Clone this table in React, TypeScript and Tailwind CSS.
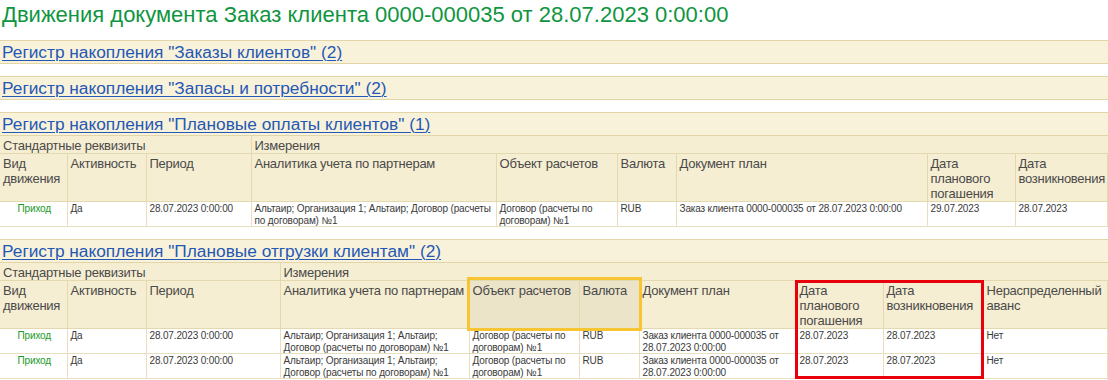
import React from 'react';

interface Column {
  title: string;
  width?: number;
  marked?: boolean;
}

interface RegisterTableProps {
  columns: Column[];
  standardSpan: number;
  rows: string[][];
}

const Band: React.FC<{ title: string }> = ({ title }) => (
  <div className="h-[24px] border-y border-[#e2d6a9] bg-[#f9f2db] px-[2px]">
    <a href="#" className="text-[17.3px] leading-[22px] text-[#2458b5] underline decoration-1 underline-offset-2">
      {title}
    </a>
  </div>
);

const RegisterTable: React.FC<RegisterTableProps> = ({ columns, standardSpan, rows }) => {
  const th = 'border border-[#e3d8ae] pl-[3px] pr-[1px] pt-[2px] align-top text-left font-normal text-[13px] leading-[15px] tracking-[-0.25px] text-[#4a4a4a]';
  const td = 'border border-[#e8dfbe] pl-[3px] pr-[1px] pt-[1px] pb-0 align-top text-[10px] leading-[11.5px] tracking-[-0.15px]';

  return (
    <table className="w-full table-fixed border-collapse">
      <colgroup>
        {columns.map((c, i) => (
          <col key={i} style={c.width ? { width: c.width } : undefined} />
        ))}
      </colgroup>
      <thead>
        <tr className="h-[17px] bg-[#f6eed2]">
          <th colSpan={standardSpan} className={`${th} border-t-0 border-l-0 pt-0`}>
            Стандартные реквизиты
          </th>
          <th colSpan={columns.length - standardSpan} className={`${th} border-t-0 border-r-0 pt-0`}>
            Измерения
          </th>
        </tr>
        <tr className="h-[48px] bg-[#f6eed2]">
          {columns.map((c, i) => (
            <th
              key={i}
              className={`${th} ${i === 0 ? 'border-l-0' : ''} ${c.marked ? 'bg-[#ebe4c9]' : ''}`}
            >
              {c.title}
            </th>
          ))}
        </tr>
      </thead>
      <tbody>
        {rows.map((r, ri) => (
          <tr key={ri} className="h-[25px] bg-white">
            {r.map((v, ci) => (
              <td
                key={ci}
                className={`${td} ${ci === 0 ? 'border-l-0 text-center text-[#179a27]' : 'text-[#3a3a3a]'}`}
              >
                {v}
              </td>
            ))}
          </tr>
        ))}
      </tbody>
    </table>
  );
};

export default function App() {
  const cols1: Column[] = [
    { title: 'Вид движения', width: 67 },
    { title: 'Активность', width: 79 },
    { title: 'Период', width: 105 },
    { title: 'Аналитика учета по партнерам', width: 245 },
    { title: 'Объект расчетов', width: 121 },
    { title: 'Валюта', width: 59 },
    { title: 'Документ план', width: 251 },
    { title: 'Дата планового погашения', width: 88 },
    { title: 'Дата возникновения' },
  ];

  const rows1 = [
    [
      'Приход',
      'Да',
      '28.07.2023 0:00:00',
      'Альтаир; Организация 1; Альтаир; Договор (расчеты по договорам) №1',
      'Договор (расчеты по договорам) №1',
      'RUB',
      'Заказ клиента 0000-000035 от 28.07.2023 0:00:00',
      '29.07.2023',
      '28.07.2023',
    ],
  ];

  const cols2: Column[] = [
    { title: 'Вид движения', width: 67 },
    { title: 'Активность', width: 79 },
    { title: 'Период', width: 134 },
    { title: 'Аналитика учета по партнерам', width: 189 },
    { title: 'Объект расчетов', width: 110, marked: true },
    { title: 'Валюта', width: 60, marked: true },
    { title: 'Документ план', width: 157 },
    { title: 'Дата планового погашения', width: 87 },
    { title: 'Дата возникновения', width: 100 },
    { title: 'Нераспределенный аванс' },
  ];

  const row2 = [
    'Приход',
    'Да',
    '28.07.2023 0:00:00',
    'Альтаир; Организация 1; Альтаир; Договор (расчеты по договорам) №1',
    'Договор (расчеты по договорам) №1',
    'RUB',
    'Заказ клиента 0000-000035 от 28.07.2023 0:00:00',
    '28.07.2023',
    '28.07.2023',
    'Нет',
  ];

  return (
    <div className="w-[1108px] h-[380px] overflow-hidden bg-white font-['Liberation_Sans',Arial,sans-serif]">
      <h1 className="h-[40px] px-[2px] pt-[2px] text-[22px] leading-[26px] font-normal text-[#0f953f]">
        Движения документа Заказ клиента 0000-000035 от 28.07.2023 0:00:00
      </h1>

      <div className="mb-[12px]">
        <Band title={'Регистр накопления "Заказы клиентов" (2)'} />
      </div>
      <div className="mb-[12px]">
        <Band title={'Регистр накопления "Запасы и потребности" (2)'} />
      </div>

      <div className="mb-[12px]">
        <Band title={'Регистр накопления "Плановые оплаты клиентов" (1)'} />
        <RegisterTable columns={cols1} standardSpan={3} rows={rows1} />
      </div>

      <div>
        <Band title={'Регистр накопления "Плановые отгрузки клиентам" (2)'} />
        <div className="relative">
          <RegisterTable columns={cols2} standardSpan={3} rows={[row2, row2]} />
          {/* highlight frames */}
          <div className="pointer-events-none absolute left-[467px] top-[14px] h-[54px] w-[175px] border-[3px] border-[#f7c531]" />
          <div className="pointer-events-none absolute left-[795px] top-[17px] h-[99px] w-[189px] border-[3px] border-[#e8000c]" />
        </div>
      </div>
    </div>
  );
}
